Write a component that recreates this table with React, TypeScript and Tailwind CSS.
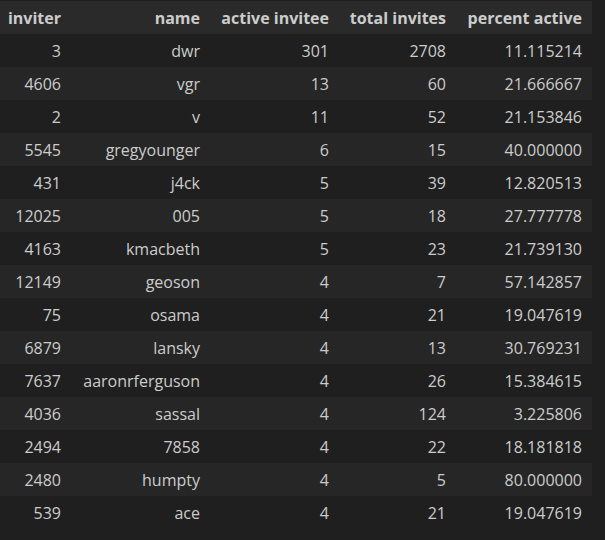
const rows: [number, string, number, number, string][] = [
  [3, "dwr", 301, 2708, "11.115214"],
  [4606, "vgr", 13, 60, "21.666667"],
  [2, "v", 11, 52, "21.153846"],
  [5545, "gregyounger", 6, 15, "40.000000"],
  [431, "j4ck", 5, 39, "12.820513"],
  [12025, "005", 5, 18, "27.777778"],
  [4163, "kmacbeth", 5, 23, "21.739130"],
  [12149, "geoson", 4, 7, "57.142857"],
  [75, "osama", 4, 21, "19.047619"],
  [6879, "lansky", 4, 13, "30.769231"],
  [7637, "aaronrferguson", 4, 26, "15.384615"],
  [4036, "sassal", 4, 124, "3.225806"],
  [2494, "7858", 4, 22, "18.181818"],
  [2480, "humpty", 4, 5, "80.000000"],
  [539, "ace", 4, 21, "19.047619"],
]

const headers = ["inviter", "name", "active invitee", "total invites", "percent active"]
const widths = ["w-[71px]", "w-[139px]", "w-[129px]", "w-[117px]", "w-[136px]"]

export default function App() {
  return (
    <div
      className="w-[605px] h-[540px] bg-[#1f1f1f] text-[#cccccc] text-[16px] overflow-hidden pt-px"
      style={{ fontFamily: '"Open Sans", "Noto Sans", sans-serif' }}
    >
      <div className="w-[592px]">
        <div className="flex h-[33px] items-center bg-[#2a2a2a] font-bold">
          {headers.map((h, i) => (
            <div key={h} className={`${widths[i]} text-right pr-[10px] whitespace-nowrap`}>
              {h}
            </div>
          ))}
        </div>
        {rows.map((r, ri) => (
          <div
            key={ri}
            className={`flex h-[33px] items-center ${ri % 2 === 1 ? "bg-[#262626]" : "bg-[#1f1f1f]"}`}
          >
            {r.map((c, i) => (
              <div key={i} className={`${widths[i]} text-right pr-[10px] whitespace-nowrap`}>
                {c}
              </div>
            ))}
          </div>
        ))}
      </div>
    </div>
  )
}
